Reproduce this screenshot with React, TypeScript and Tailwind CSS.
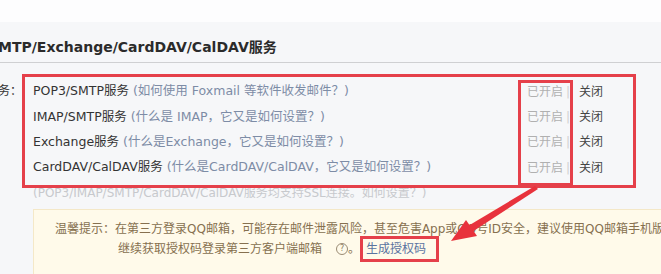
import React from 'react';

const rows = [
  { name: 'POP3/SMTP服务', help: '(如何使用 Foxmail 等软件收发邮件？)' },
  { name: 'IMAP/SMTP服务', help: '(什么是 IMAP，它又是如何设置？)' },
  { name: 'Exchange服务', help: '(什么是Exchange，它又是如何设置？)' },
  { name: 'CardDAV/CalDAV服务', help: '(什么是CardDAV/CalDAV，它又是如何设置？)' },
];

export default function App() {
  return (
    <div
      className="relative w-[661px] h-[274px] overflow-hidden bg-[#f6f7f9] text-[12px] text-[#333]"
      style={{ fontFamily: '"DejaVu Sans", "Noto Sans CJK SC", sans-serif' }}
    >
      <div className="h-[22px] bg-[#fdfdfe]" />

      {/* section title */}
      <div className="h-[41px] pt-[16px] border-b border-[#cfd0d2]">
        <div className="-ml-[2px] text-[14px] leading-[18px] font-bold text-[#2b2b2b] whitespace-nowrap">
          MTP/Exchange/CardDAV/CalDAV服务
        </div>
      </div>

      {/* services */}
      <div className="mt-[11px] flex">
        <div className="w-[22px] mt-[5px] leading-[25px] whitespace-nowrap flex justify-end">务：</div>
        <div className="relative z-10 w-[614px] border-[3px] border-[#e5404a] pt-[2px] pb-[5px]">
          {rows.map((r) => (
            <div key={r.name} className="flex items-center h-[25.3px] pl-[8px] whitespace-nowrap">
              <div className="flex-1 text-[12.5px]">
                <span className="text-[#333]">{r.name}</span>{' '}
                <span className="text-[#7d8ca6]">{r.help}</span>
              </div>
              <div className="w-[106px] flex items-center">
                <span className="text-[#b0b0b0]">已开启</span>
                <span className="ml-[3px] mr-[9px] text-[#d0d0d0]">|</span>
                <span className="text-[#444]">关闭</span>
              </div>
            </div>
          ))}
        </div>
      </div>

      <div className="-mt-[3px] pl-[33px] leading-[16px] text-[#c7c9cd] whitespace-nowrap">
        (POP3/IMAP/SMTP/CardDAV/CalDAV服务均支持SSL连接。如何设置？)
      </div>

      {/* notice */}
      <div className="mt-[8px] ml-[33px] w-[700px] h-[66px] bg-[#fffaea] border border-[#f4e8c8] pt-[9px] text-[#86704f] leading-[20px] whitespace-nowrap">
        <div className="pl-[21px]">
          温馨提示：在第三方登录QQ邮箱，可能存在邮件泄露风险，甚至危害App或QQ号ID安全，建议使用QQ邮箱手机版
        </div>
        <div className="pl-[84px] flex items-center">
          <span>继续获取授权码登录第三方客户端邮箱</span>
          <span className="ml-[14px] inline-flex items-center justify-center w-[12px] h-[12px] rounded-full border border-[#9a8b74] text-[8px] leading-none text-[#8a7a62]">
            ?
          </span>
          <span>。</span>
          <span className="inline-block -my-[3px] border-[3px] border-[#e5404a] pl-[3px] pr-[10px] text-[#5b73a0]">
            生成授权码
          </span>
        </div>
      </div>

      {/* highlight around status column */}
      <div className="absolute left-[518px] top-[80px] w-[55px] h-[106px] border-[3px] border-[#e5404a] z-20" />

      {/* arrow */}
      <svg className="absolute left-0 top-0 z-30 pointer-events-none" width="661" height="274">
        <polygon points="535,186 538,189 472,232 468,226" fill="#e8323c" />
        <polygon points="451,241 466,220 477,236" fill="#e8323c" />
      </svg>
    </div>
  );
}
